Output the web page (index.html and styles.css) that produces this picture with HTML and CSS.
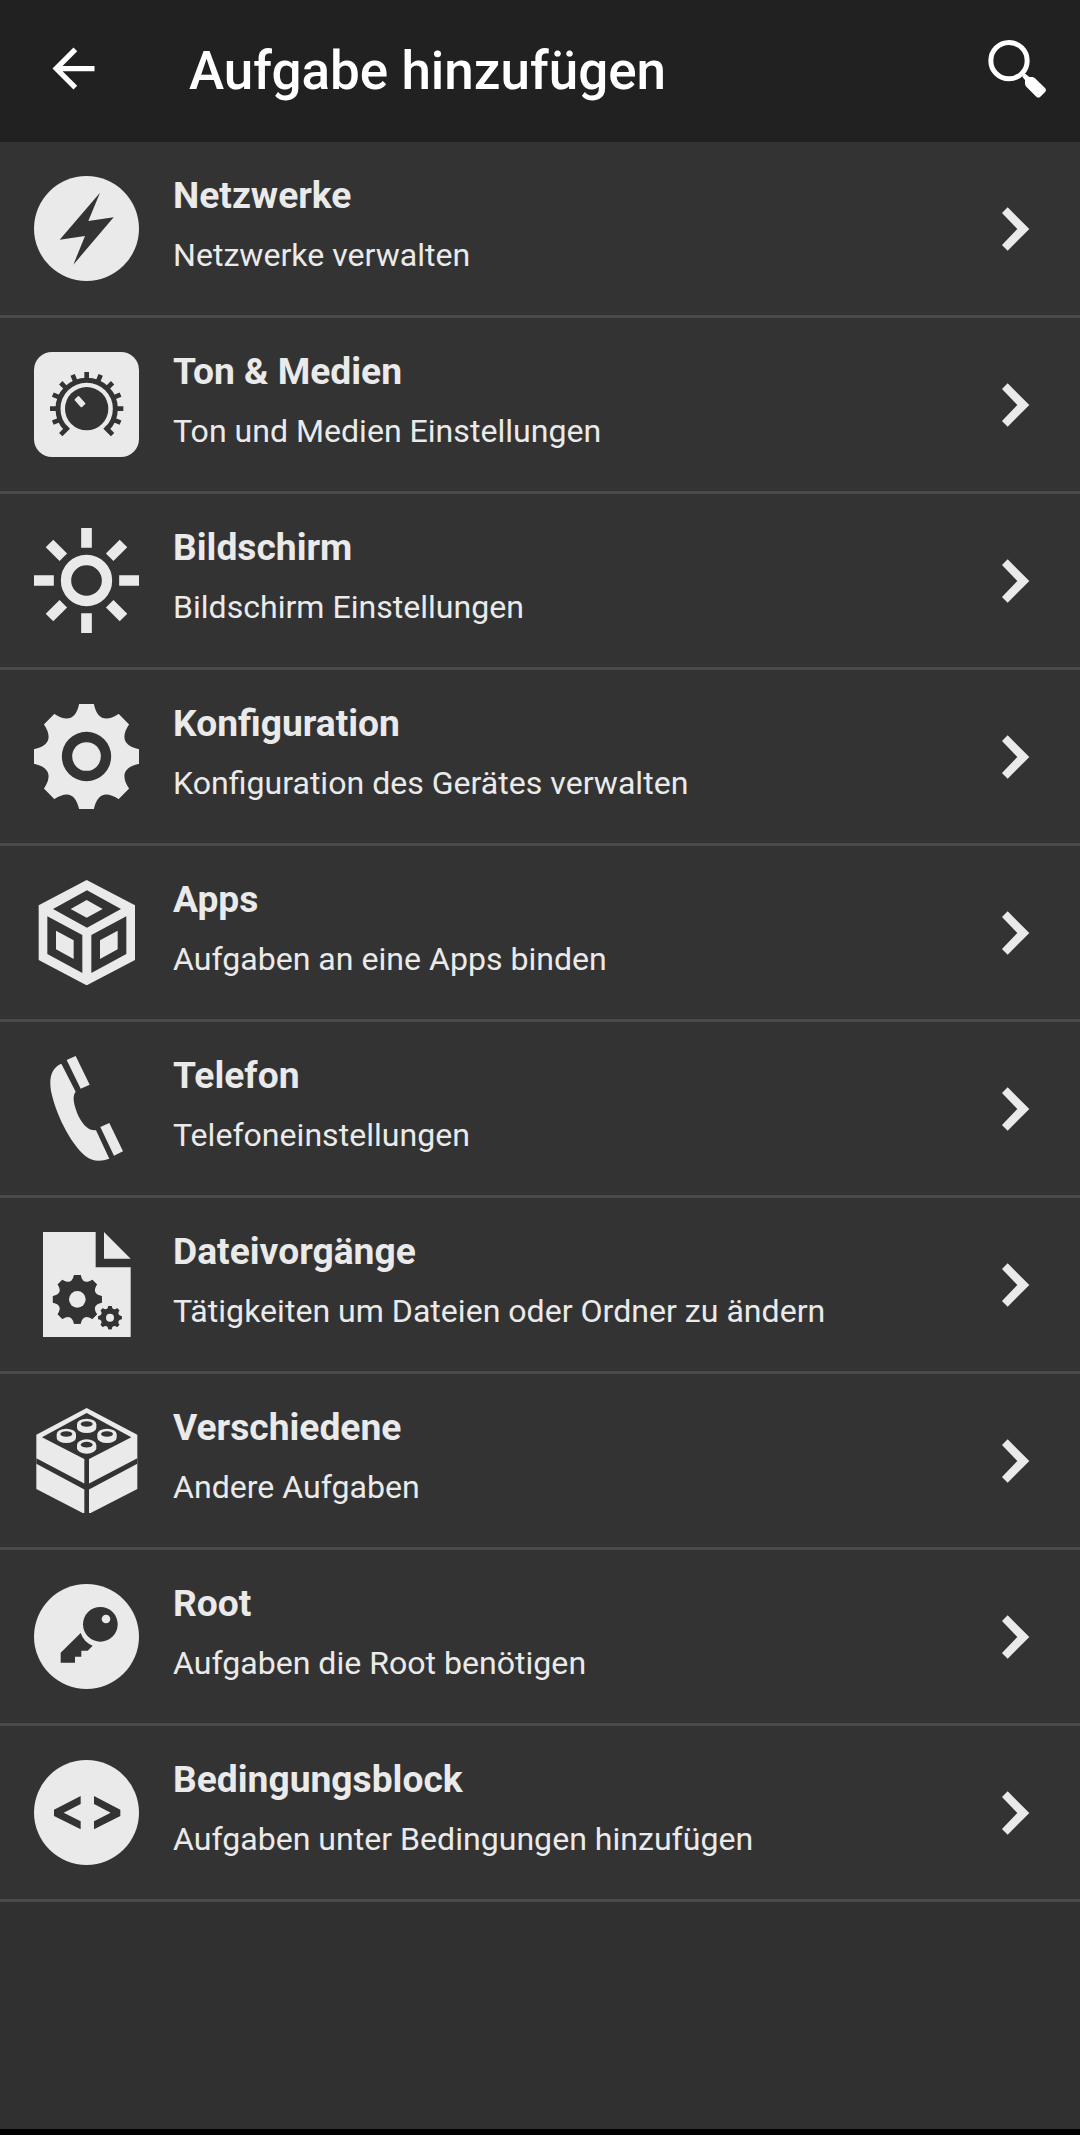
FILE: index.html
```html
<!DOCTYPE html>
<html lang="de">
<head>
<meta charset="utf-8">
<title>Aufgabe hinzufügen</title>
<link rel="stylesheet" href="styles.css">
</head>
<body>
<svg class="defs" aria-hidden="true">
  <defs>
    <path id="gear-part" d="M-22-158H22C32-112 56.700-101.900 96.200-127.300L127.300-96.200 0 0Z"/>
    <g id="gear">
      <use href="#gear-part"/><use href="#gear-part" transform="rotate(45)"/><use href="#gear-part" transform="rotate(90)"/><use href="#gear-part" transform="rotate(135)"/><use href="#gear-part" transform="rotate(180)"/><use href="#gear-part" transform="rotate(225)"/><use href="#gear-part" transform="rotate(270)"/><use href="#gear-part" transform="rotate(315)"/>
    </g>
    <g id="stud">
      <path class="lit" d="M-29 0A29 17 0 0 1 29 0V10A29 16 0 0 1-29 10Z"/>
      <ellipse class="cut" cy="-1" rx="18" ry="8.500"/>
    </g>
    <path id="chevron" d="M203 622L268 687 203 752 186 735 232 687 186 639Z"/>
  </defs>
</svg>
<header class="bar">
  <svg class="back" viewBox="0 0 24 24"><path d="M20 11H7.830l5.590-5.590L12 4l-8 8 8 8 1.410-1.410L7.830 13H20v-2z"/></svg>
  <h1 class="bar-title">Aufgabe hinzufügen</h1>
  <svg class="search" viewBox="144 114 177 177"><circle cx="207" cy="179" r="54.500"/><path d="M247 227L254 217 268 228H278Q282 229 285 232L315 261Q320 267 316 272L301 287Q295 292 289 287L259 257Q255 253 255 248V237Z"/></svg>
</header>
<main class="list">
  <section class="row">
    <svg class="icon" viewBox="42 48 315 315"><circle class="lit" cx="199.500" cy="205.500" r="157.500"/><path class="cut" d="M240 98L119 239 195 228 160 314 281 172 205 183Z"/></svg>
    <div class="text"><h2>Netzwerke</h2><p>Netzwerke verwalten</p></div>
    <svg class="go" viewBox="186 621 81 129"><use href="#chevron"/></svg>
  </section>
  <section class="row">
    <svg class="icon" viewBox="42 36 315 315"><rect class="lit" x="42" y="36" width="315" height="315" rx="54"/>
      <g transform="translate(200 206)"><circle class="cut" r="65"/><path class="ring" d="M-61 61A86 86 0 1 1 61 61"/>
      <path class="tick" d="M0-84V-110M32.100-77.600L42.100-101.600M59.400-59.400L77.800-77.800M77.600-32.100L101.600-42.100M84 0H110M77.600 32.100L101.600 42.100M55 55L77.800 77.800M-32.100-77.600L-42.100-101.600M-59.400-59.400L-77.800-77.800M-77.600-32.100L-101.600-42.100M-84 0H-110M-77.600 32.100L-101.600 42.100M-55 55L-77.800 77.800"/>
      <rect class="lit" x="-16" y="-9" width="32" height="18" rx="3" transform="translate(-20 -21) rotate(48)"/></g></svg>
    <div class="text"><h2>Ton &amp; Medien</h2><p>Ton und Medien Einstellungen</p></div>
    <svg class="go" viewBox="186 621 81 129"><use href="#chevron"/></svg>
  </section>
  <section class="row">
    <svg class="icon" viewBox="-157.500 -157.500 315 315"><circle class="sun" r="61.500"/><path class="ray" d="M0-157.500V-98M0 157.500V98M-157.500 0H-98M157.500 0H98M-111-111L-69.500-69.500M111-111L69.500-69.500M-111 111L-69.500 69.500M111 111L69.500 69.500"/></svg>
    <div class="text"><h2>Bildschirm</h2><p>Bildschirm Einstellungen</p></div>
    <svg class="go" viewBox="186 621 81 129"><use href="#chevron"/></svg>
  </section>
  <section class="row">
    <svg class="icon" viewBox="-157.500 -157.500 315 315"><use class="lit" href="#gear"/><circle class="cut" r="74"/><circle class="lit" r="43"/></svg>
    <div class="text"><h2>Konfiguration</h2><p>Konfiguration des Gerätes verwalten</p></div>
    <svg class="go" viewBox="186 621 81 129"><use href="#chevron"/></svg>
  </section>
  <section class="row">
    <svg class="icon" viewBox="42 30 315 315"><path class="lit" d="M200 30L345 106V270L200 346 56 270V106Z"/><path class="cut" d="M201 61L303 117 201 173 99 117ZM82 139L187 195V309L82 252ZM319 139L214 195V309L319 252Z"/><path class="lit" d="M200 90L248 117 200 143 152 117ZM108 182L161 211V267L108 238ZM293 182L240 211V267L293 238Z"/></svg>
    <div class="text"><h2>Apps</h2><p>Aufgaben an eine Apps binden</p></div>
    <svg class="go" viewBox="186 621 81 129"><use href="#chevron"/></svg>
  </section>
  <section class="row">
    <svg class="icon" viewBox="42 33 315 315"><path class="lit" d="M124 56C96 68 86 96 93 138C106 202 148 292 196 333C216 350 243 350 268 341L228 256C204 258 184 235 171 203C160 174 157 153 167 140ZM140 45L167 33 209 119 182 131ZM241 246L268 234 309 319 282 332Z"/></svg>
    <div class="text"><h2>Telefon</h2><p>Telefoneinstellungen</p></div>
    <svg class="go" viewBox="186 621 81 129"><use href="#chevron"/></svg>
  </section>
  <section class="row">
    <svg class="icon" viewBox="42 36 315 315"><path class="lit" d="M69 36H227V142H332V352H69ZM252 36V116H332Z"/><use class="cut" href="#gear" transform="translate(172 238) scale(.464)"/><circle class="lit" cx="172" cy="238" r="25"/><use class="cut" href="#gear" transform="translate(270 293) scale(.222)"/><circle class="lit" cx="270" cy="293" r="12"/></svg>
    <div class="text"><h2>Dateivorgänge</h2><p>Tätigkeiten um Dateien oder Ordner zu ändern</p></div>
    <svg class="go" viewBox="186 621 81 129"><use href="#chevron"/></svg>
  </section>
  <section class="row">
    <svg class="icon" viewBox="42 39 315 315"><path class="lit" d="M200 39L352 119V282L208 356H192L49 282V119Z"/><path class="cut" d="M200 54L334 127 200 196 66 127ZM193 190H207V360H193ZM49 190L200 269 352 190V206L200 287 49 206Z"/><use href="#stud" x="200" y="88"/><use href="#stud" x="139" y="118"/><use href="#stud" x="261" y="118"/><use href="#stud" x="200" y="150"/></svg>
    <div class="text"><h2>Verschiedene</h2><p>Andere Aufgaben</p></div>
    <svg class="go" viewBox="186 621 81 129"><use href="#chevron"/></svg>
  </section>
  <section class="row">
    <svg class="icon" viewBox="42 42 315 315"><circle class="lit" cx="199.500" cy="199.500" r="157.500"/><circle class="cut" cx="241" cy="163" r="52"/><circle class="lit" cx="258" cy="147" r="13"/><path class="cut" d="M182 189L122 248V278H165V260H184V242H203L218 227A62 62 0 0 1 182 189Z"/></svg>
    <div class="text"><h2>Root</h2><p>Aufgaben die Root benötigen</p></div>
    <svg class="go" viewBox="186 621 81 129"><use href="#chevron"/></svg>
  </section>
  <section class="row">
    <svg class="icon" viewBox="42 570 315 315"><circle class="lit" cx="199.500" cy="727.500" r="157.500"/><path class="cut" d="M182 678L102 719V738L182 778V754L131 728 182 702ZM222 678L301 719V738L222 778V754L272 728 222 702Z"/></svg>
    <div class="text"><h2>Bedingungsblock</h2><p>Aufgaben unter Bedingungen hinzufügen</p></div>
    <svg class="go" viewBox="186 621 81 129"><use href="#chevron"/></svg>
  </section>
</main>
</body>
</html>
```
FILE: styles.css
```css
* { box-sizing: border-box; }
body {
  margin: 0;
  min-height: 2135px;
  display: flex;
  flex-direction: column;
  background: #303030;
  border-bottom: 6px solid #000;
  font-family: Roboto, "Liberation Sans", sans-serif;
  color: #eaeaea;
}
.defs { position: absolute; width: 0; height: 0; }
.bar {
  height: 142px;
  padding: 0 33px 5px 42px;
  display: flex;
  align-items: center;
  background: #212121;
  color: #fff;
  fill: #fff;
}
.back { width: 63px; height: 63px; }
.bar-title {
  flex: 1;
  margin: 5px 0 0 84px;
  font-size: 53px;
  line-height: 62px;
  font-weight: 500;
}
.search { width: 59px; height: 59px; }
.search circle { fill: none; stroke: #fff; stroke-width: 15; }
.row {
  height: 176px;
  padding: 0 51px 0 34px;
  display: flex;
  align-items: center;
  background: #333;
  border-bottom: 3px solid #4a4a4a;
}
.icon { width: 105px; height: 105px; flex: none; }
.lit { fill: #eaeaea; }
.cut { fill: #333; }
.ring { fill: none; stroke: #333; stroke-width: 15; }
.tick { fill: none; stroke: #333; stroke-width: 14; }
.sun { fill: none; stroke: #eaeaea; stroke-width: 31; }
.ray { fill: none; stroke: #eaeaea; stroke-width: 32; }
.text { flex: 1; margin-left: 34px; padding-bottom: 9px; white-space: nowrap; }
.text h2 { margin: 0 0 17px; font-size: 37.200px; line-height: 44px; font-weight: 700; }
.text p { margin: 0; font-size: 32.100px; line-height: 42px; }
.go { width: 27px; height: 43px; overflow: visible; fill: #eaeaea; }
```
